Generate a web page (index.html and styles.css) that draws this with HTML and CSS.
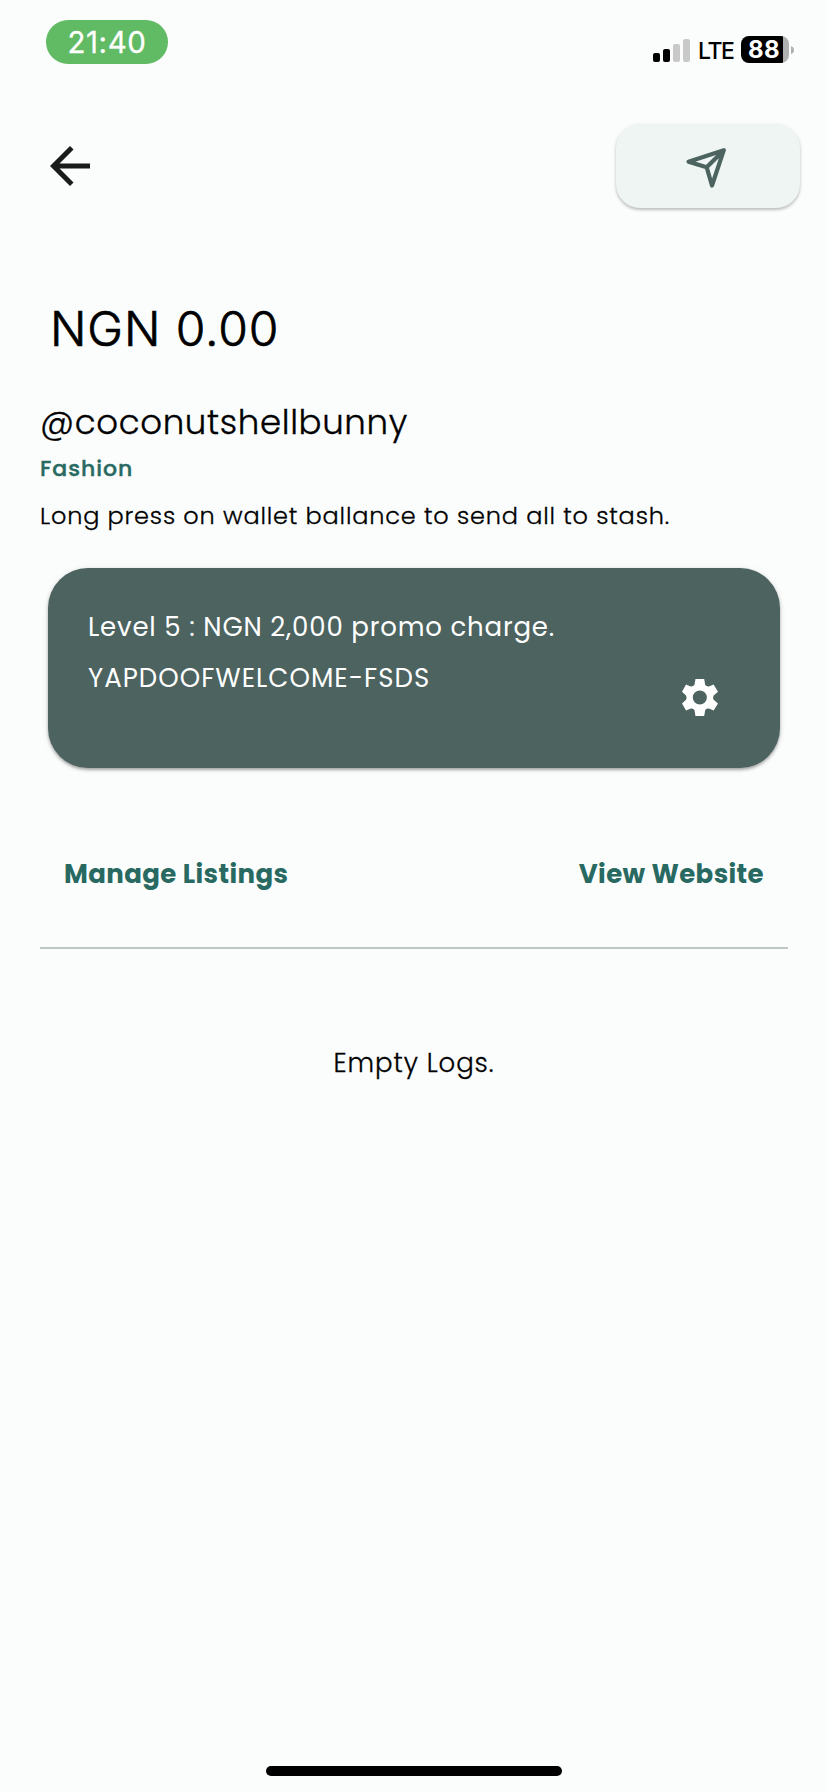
FILE: index.html
```html
<!DOCTYPE html>
<html lang="en">
<head>
<meta charset="utf-8">
<title>Wallet</title>
<link rel="stylesheet" href="styles.css">
</head>
<body>
<div class="screen">
  <header class="status">
    <div class="clock"><span class="clock-text">21:40</span></div>
    <div class="status-right">
      <svg class="signal" viewBox="0 0 37 23"><rect y="14" width="7" height="9" rx="2"/><rect x="10" y="10" width="7" height="13" rx="2"/><g fill="#c8c9c8"><rect x="20" y="5" width="7" height="18" rx="2"/><rect x="30" width="7" height="23" rx="2"/></g></svg>
      <span class="network">LTE</span>
      <div class="battery"><span class="battery-text">88</span></div>
      <svg class="nub" viewBox="0 0 3 8"><path d="M0 0Q3 1 3 4T0 8Z" fill="#b0b2b1"/></svg>
    </div>
  </header>
  <nav class="toolbar">
    <svg class="back" viewBox="0 0 24 24"><path fill="#191c1b" d="M20 11H7.83l5.59-5.59L12 4l-8 8 8 8 1.41-1.41L7.83 13H20z"/></svg>
    <button class="send" aria-label="Send"><svg class="plane" viewBox="0 0 42 42"><path d="M38.8 3.2 3.5 14.7l18.2 5.6L27 38.5ZM21.7 20.3 38.8 3.2" fill="none" stroke="#4c635f" stroke-width="4.2" stroke-linejoin="round" stroke-linecap="round"/></svg></button>
  </nav>
  <main class="content">
    <div class="balance"><span class="balance-text">NGN 0.00</span></div>
    <div class="handle"><span class="handle-text">@coconutshellbunny</span></div>
    <div class="category"><span class="category-text">Fashion</span></div>
    <div class="hint"><span class="hint-text">Long press on wallet ballance to send all to stash.</span></div>
    <section class="card">
      <div class="card-lines">
        <div class="card-line"><span class="level-text">Level 5 : NGN 2,000 promo charge.</span></div>
        <div class="card-line"><span class="code-text">YAPDOOFWELCOME-FSDS</span></div>
      </div>
      <svg class="gear" viewBox="757 389 107 110"><path fill="#fff" fill-rule="evenodd" d="M797 389H823L826 407Q831 412 837 411L851 405L864 427L851 438Q848 444 851 451L864 462L851 483L837 477Q831 476 826 481L823 499H797L794 481Q789 476 783 477L769 483L757 462L769 451Q772 444 769 438L757 427L769 405L783 411Q789 412 794 407ZM810 423A21 21 0 1 0 810 465A21 21 0 1 0 810 423Z"/></svg>
    </section>
    <div class="links"><span class="manage">Manage Listings</span><span class="website">View Website</span></div>
    <div class="empty"><span class="empty-text">Empty Logs.</span></div>
  </main>
  <div class="home"></div>
</div>
</body>
</html>
```
FILE: styles.css
```css
* { box-sizing: border-box; }
body { margin: 0; background: #fbfdfc; color: #000; font-family: Poppins, Inter, "Liberation Sans", sans-serif; }
span { white-space: nowrap; }
svg { display: block; flex: none; }
.screen { width: 828px; height: 1792px; display: flex; flex-direction: column; overflow: hidden; }
.status { display: flex; justify-content: space-between; align-items: flex-start; height: 124px; padding: 20px 34px 0 46px; font-family: Inter, sans-serif; }
.clock { width: 122px; height: 44px; border-radius: 22px; background: #61ba64; color: #fff; font-size: 29.5px; font-weight: 400; line-height: 44px; text-align: center; }
.clock-text { letter-spacing: .6px; -webkit-text-stroke: .3px #fff; }
.status-right { display: flex; align-items: center; height: 27px; margin-top: 16px; }
.signal { width: 37px; height: 23px; margin-top: 1px; }
.network { width: 33px; margin: 3px 10px 0 8px; font-size: 23px; line-height: 27px; font-weight: 500; letter-spacing: -1.4px; }
.battery { width: 48px; height: 27px; border-radius: 8px; background: linear-gradient(90deg, #000 42px, #b0b2b1 42px); color: #fff; font-size: 24px; font-weight: 700; line-height: 28px; padding-left: 7px; letter-spacing: .5px; }
.nub { width: 3px; height: 8px; margin-left: 2px; }
.toolbar { display: flex; justify-content: space-between; align-items: flex-start; height: 156px; padding: 0 28px 0 40px; }
.back { width: 60px; height: 60px; margin-top: 12px; }
.send { display: flex; align-items: center; justify-content: center; width: 184px; height: 84px; padding: 0 4px 0 0; border: 0; border-radius: 24px; background: #eff5f3; box-shadow: 0 2px 3px rgba(0,0,0,.22), 0 1px 5px rgba(0,0,0,.06); }
.plane { width: 42px; height: 42px; margin-top: 4px; }
.content { flex: 1; padding: 0 40px; }
.balance { height: 98px; padding-left: 10px; font-family: Inter, sans-serif; font-size: 48px; font-weight: 300; line-height: 98px; letter-spacing: .9px; -webkit-text-stroke: .7px #000; }
.handle { height: 68px; margin-top: 10px; font-size: 34px; font-weight: 300; line-height: 69px; letter-spacing: .65px; -webkit-text-stroke: .35px #000; }
.category { height: 24px; color: #286a62; font-size: 22px; font-weight: 500; line-height: 26px; letter-spacing: 1px; -webkit-text-stroke: .4px #286a62; }
.hint { height: 68px; font-size: 24px; font-weight: 300; line-height: 71px; letter-spacing: .82px; -webkit-text-stroke: .3px #000; }
.card { display: flex; justify-content: space-between; height: 200px; margin: 20px 8px 0; padding: 34px 62px 0 40px; border-radius: 40px; background: #4c635f; color: #fff; box-shadow: 0 2px 3px rgba(0,0,0,.3), 0 1px 6px rgba(0,0,0,.1); }
.card-line { height: 51px; font-size: 26px; font-weight: 400; line-height: 51px; }
.level-text { letter-spacing: .82px; }
.code-text { letter-spacing: 1.03px; }
.gear { width: 36px; height: 37px; margin-top: 77px; }
.links { display: flex; justify-content: space-between; height: 181px; padding: 81px 24px 0; border-bottom: 2px solid #bfc8c5; color: #286a62; font-size: 26px; font-weight: 700; line-height: 51px; letter-spacing: .4px; }
.empty { padding-top: 89px; text-align: center; font-size: 26px; font-weight: 300; line-height: 51px; letter-spacing: .9px; -webkit-text-stroke: .3px #000; }
.home { width: 296px; height: 10px; margin: 0 auto 16px; border-radius: 5px; background: #000; }
```
